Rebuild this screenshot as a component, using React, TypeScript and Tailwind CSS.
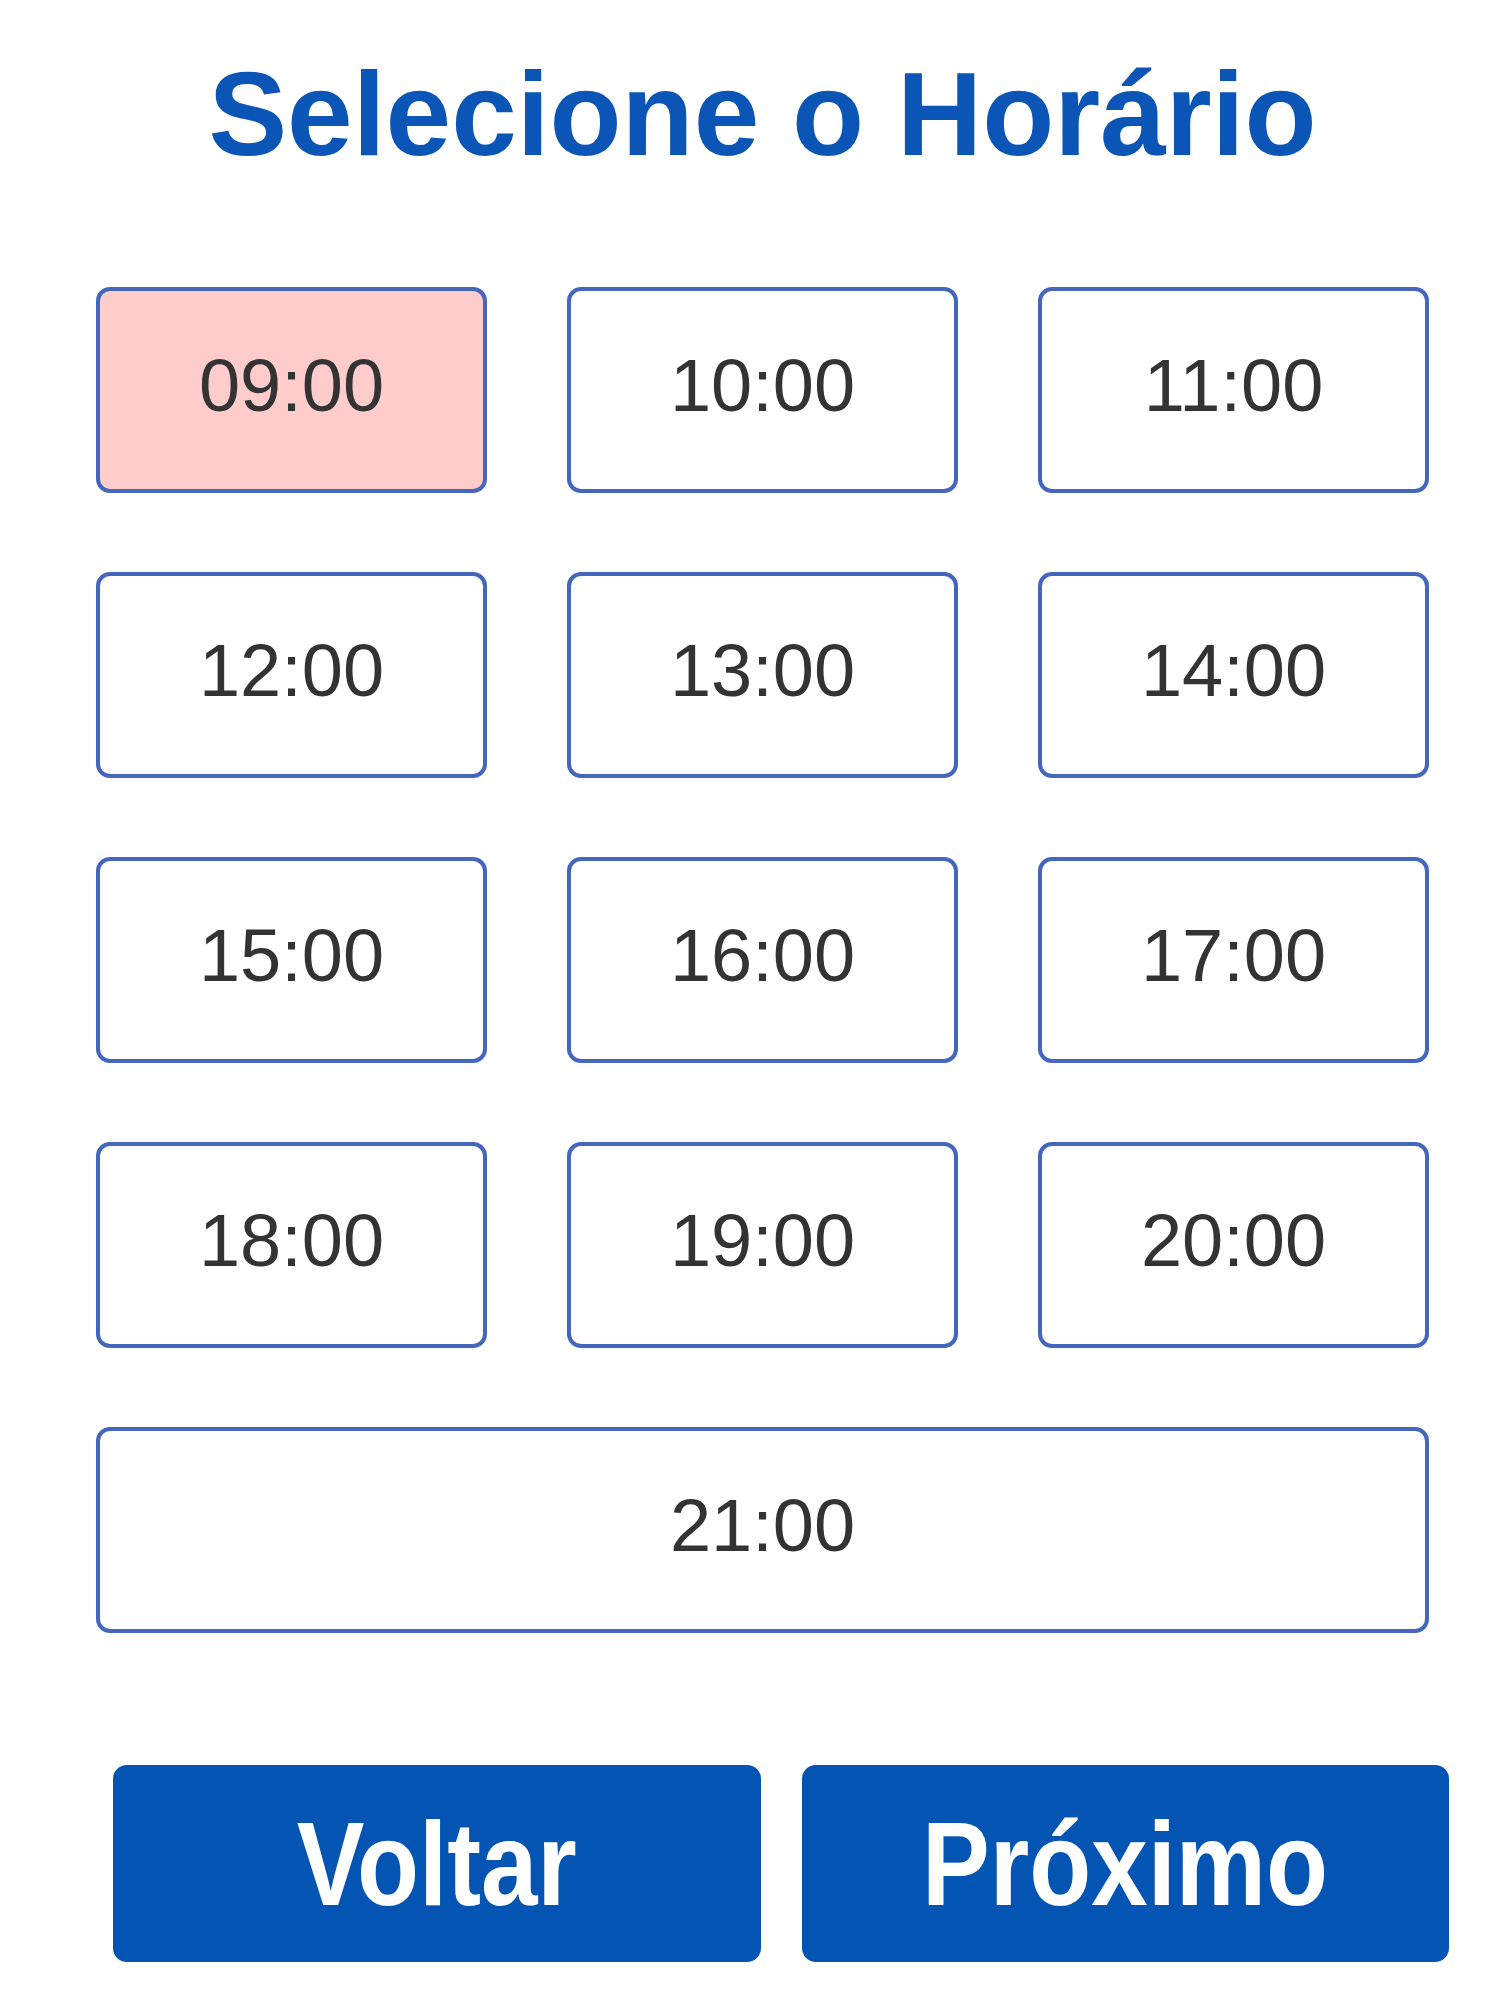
import { useState } from 'react';

const horarios = [
  '09:00', '10:00', '11:00',
  '12:00', '13:00', '14:00',
  '15:00', '16:00', '17:00',
  '18:00', '19:00', '20:00',
  '21:00',
];

export default function App() {
  const [selected, setSelected] = useState('09:00');

  return (
    <div className="min-h-screen w-[1512px] bg-white font-['Liberation_Sans',Arial,sans-serif]">
      <div className="ml-[96px] w-[1333px] pt-[55px]">
        <h1 className="text-center text-[118px] leading-[118px] font-bold text-[#0b55b6]">
          Selecione o Horário
        </h1>

        <div className="mt-[114px] grid grid-cols-3 gap-x-[80px] gap-y-[79px]">
          {horarios.map((h, i) => (
            <button
              key={h}
              onClick={() => setSelected(h)}
              className={`h-[206px] rounded-[14px] border-4 border-[#4466bd] pb-[8px] text-[74px] leading-none text-[#333333] ${
                selected === h ? 'bg-[#ffcccc]' : 'bg-white'
              } ${i === horarios.length - 1 ? 'col-span-3' : ''}`}
            >
              {h}
            </button>
          ))}
        </div>
      </div>

      <div className="ml-[113px] mt-[132px] flex gap-[41px] pb-[54px]">
        <button className="flex h-[197px] w-[648px] items-center justify-center rounded-[14px] bg-[#0455b3] text-white">
          <span className="inline-block scale-x-[0.86] text-[118px] leading-none font-bold">Voltar</span>
        </button>
        <button className="flex h-[197px] w-[647px] items-center justify-center rounded-[14px] bg-[#0455b3] text-white">
          <span className="inline-block scale-x-[0.86] text-[118px] leading-none font-bold">Próximo</span>
        </button>
      </div>
    </div>
  );
}
